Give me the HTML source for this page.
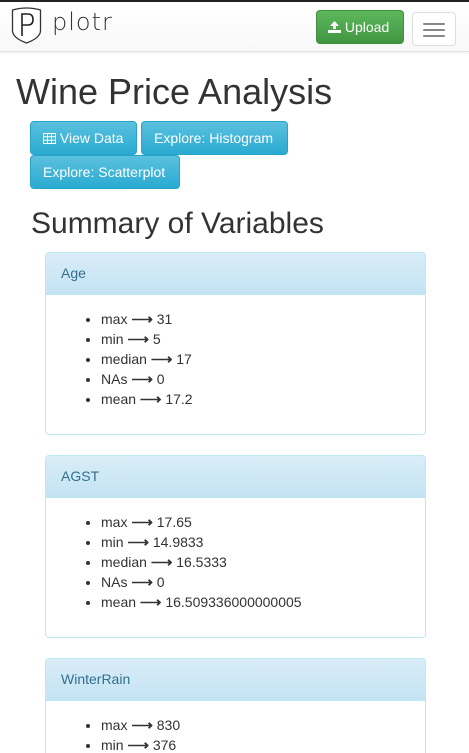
<!DOCTYPE html>
<html style="height:753px;overflow:hidden"><head><meta charset="utf-8"><style>
*{box-sizing:border-box}
html,body{margin:0;width:469px;height:753px;overflow:hidden}
body{position:relative;font-family:"Liberation Sans",sans-serif;font-size:14px;color:#333;background:#fff}
.topb{position:absolute;left:0;top:0;width:469px;height:2px;background:#222}
.nav{position:absolute;left:0;top:2px;width:469px;height:50px;background:linear-gradient(#fff,#f8f8f8);border-bottom:1px solid #e4e4e4;box-shadow:0 1px 3px rgba(0,0,0,.08)}
.brand{position:absolute;left:52px;top:6px;font-size:24px;color:#333;font-family:"DejaVu Sans",sans-serif;font-weight:200;letter-spacing:1px}
.logo{position:absolute;left:11px;top:5px}
.up{position:absolute;left:316px;top:8px;width:88px;height:34px;border-radius:4px;background:linear-gradient(#5cb85c,#419641);border:1px solid #3e8f3e;color:#fff;font-size:14px;line-height:32px;padding-left:11px}
.tog{position:absolute;left:412px;top:10px;width:44px;height:34px;border:1px solid #ddd;border-radius:4px;background:#fff}
.tog i{position:absolute;left:10px;width:22px;height:2px;background:#888;border-radius:1px}
h1{position:absolute;left:16px;top:70px;margin:0;font-size:36px;font-weight:500;line-height:44px}
.btn{position:absolute;height:34px;border-radius:4px;background:linear-gradient(#5bc0de,#2aabd2);border:1px solid #28a4c9;color:#fff;font-size:14px;line-height:32px;padding:0 12px;white-space:nowrap}
h2{position:absolute;left:31px;top:206px;margin:0;font-size:30px;font-weight:500;line-height:36px}
.panel{position:absolute;left:45px;width:381px;border:1px solid #bce8f1;border-radius:4px;background:#fff;overflow:hidden}
.ph{height:42px;background:linear-gradient(#d9edf7,#c4e3f3);border-bottom:1px solid #bce8f1;color:#31708f;padding:0 15px;line-height:40px;font-size:14px}
.pb{padding:14px 15px 15px}
ul{margin:0 0 10px;padding-left:40px;line-height:20px}
li{height:20px}
b{font-weight:bold;font-size:15px;line-height:0}
</style></head><body>
<div class="topb"></div>
<div class="nav">
<svg class="logo" width="31" height="38" viewBox="0 0 31 38"><path d="M1.5 3 Q15.5 -1 29.5 3 L29.5 24 Q29 31 15.5 36 Q2 31 1.5 24 Z" fill="#fff" stroke="#333" stroke-width="1.3"/><path d="M11 29 V7 H17 Q22 7 22 12.5 Q22 18 17 18 H11" fill="none" stroke="#222" stroke-width="1.6"/></svg>
<div class="brand">plotr</div>
<div class="up"><svg width="13" height="12" viewBox="0 0 13 12" style="vertical-align:-1px"><path d="M6.5 0 L11 5 H8 V8 H5 V5 H2 Z M0 9 H13 V12 H0 Z" fill="#fff"/></svg> Upload</div>
<div class="tog"><i style="top:10px"></i><i style="top:16px"></i><i style="top:22px"></i></div>
</div>
<h1>Wine Price Analysis</h1>
<div class="btn" style="left:30px;top:121px;width:107px"><svg width="13" height="11" viewBox="0 0 13 11" style="vertical-align:-1px"><path d="M0.5 0.5h12v10h-12zM0.5 3.8h12M0.5 7.2h12M4.5 0.5v10M8.5 0.5v10" fill="none" stroke="#fff" stroke-width="1"/></svg> View Data</div>
<div class="btn" style="left:141px;top:121px;width:147px">Explore: Histogram</div>
<div class="btn" style="left:30px;top:155px;width:150px">Explore: Scatterplot</div>
<h2>Summary of Variables</h2>
<div class="panel" style="top:252px;height:183px"><div class="ph">Age</div><div class="pb"><ul><li>max <b>⟶</b> 31</li><li>min <b>⟶</b> 5</li><li>median <b>⟶</b> 17</li><li>NAs <b>⟶</b> 0</li><li>mean <b>⟶</b> 17.2</li></ul></div></div>
<div class="panel" style="top:455px;height:183px"><div class="ph">AGST</div><div class="pb"><ul><li>max <b>⟶</b> 17.65</li><li>min <b>⟶</b> 14.9833</li><li>median <b>⟶</b> 16.5333</li><li>NAs <b>⟶</b> 0</li><li>mean <b>⟶</b> 16.509336000000005</li></ul></div></div>
<div class="panel" style="top:658px;height:95px;border-bottom:none;border-radius:4px 4px 0 0"><div class="ph">WinterRain</div><div class="pb"><ul><li>max <b>⟶</b> 830</li><li>min <b>⟶</b> 376</li><li>median <b>⟶</b> 600</li></ul></div></div>
</body></html>
